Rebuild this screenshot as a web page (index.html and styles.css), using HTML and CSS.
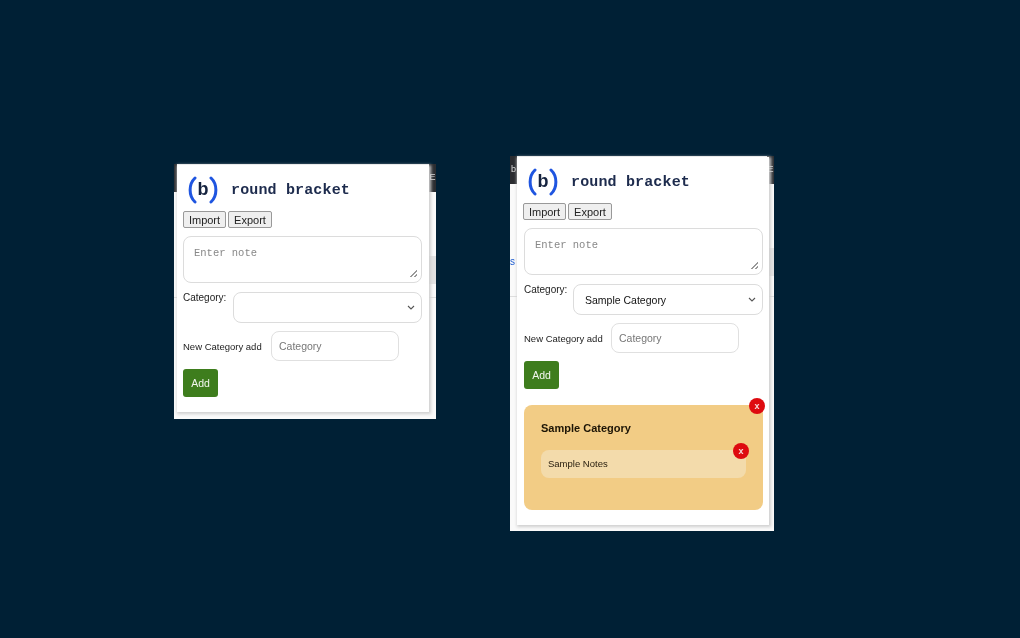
FILE: index.html
```html
<!DOCTYPE html>
<html lang="en">
<head>
<meta charset="utf-8">
<title>round bracket</title>
<link rel="stylesheet" href="styles.css">
</head>
<body>
<div class="desktop">
  <section class="shot shot-a">
    <div class="backdrop">
      <div class="strip strip-left"></div>
      <div class="strip strip-right"><span>E</span></div>
      <div class="tab tab-right"></div>
      <div class="rule rule-a"></div>
    </div>
    <div class="popup">
      <header class="brand">
        <span class="logo"><svg width="30" height="28" viewBox="0 0 30 28"><path d="M7 2C0.5 8 0.5 20 7 26M23 2C29.500 8 29.500 20 23 26" fill="none" stroke="#1f55e0" stroke-width="3" stroke-linecap="round"/></svg><b>b</b></span>
        <span class="brand-name">round bracket</span>
      </header>
      <div class="actions"><button class="tool">Import</button><button class="tool">Export</button></div>
      <textarea class="note-input" placeholder="Enter note"></textarea>
      <div class="row row-cat">
        <label class="cat-label">Category:</label>
        <div class="select"><span></span><svg width="8" height="5" viewBox="0 0 8 5"><path d="M1 1l3 3 3-3" fill="none" stroke="#555" stroke-width="1.100"/></svg></div>
      </div>
      <div class="row row-new">
        <label class="new-label">New Category add</label>
        <input class="new-input" placeholder="Category">
      </div>
      <button class="add">Add</button>
    </div>
  </section>

  <section class="shot shot-b">
    <div class="backdrop">
      <div class="strip strip-left"><span>b</span></div>
      <div class="strip strip-right"><span>E</span></div>
      <div class="tab tab-right"></div>
      <div class="rule rule-b"></div>
      <div class="link-bit">s</div>
    </div>
    <div class="popup">
      <header class="brand">
        <span class="logo"><svg width="30" height="28" viewBox="0 0 30 28"><path d="M7 2C0.5 8 0.5 20 7 26M23 2C29.500 8 29.500 20 23 26" fill="none" stroke="#1f55e0" stroke-width="3" stroke-linecap="round"/></svg><b>b</b></span>
        <span class="brand-name">round bracket</span>
      </header>
      <div class="actions"><button class="tool">Import</button><button class="tool">Export</button></div>
      <textarea class="note-input" placeholder="Enter note"></textarea>
      <div class="row row-cat">
        <label class="cat-label">Category:</label>
        <div class="select"><span>Sample Category</span><svg width="8" height="5" viewBox="0 0 8 5"><path d="M1 1l3 3 3-3" fill="none" stroke="#555" stroke-width="1.100"/></svg></div>
      </div>
      <div class="row row-new">
        <label class="new-label">New Category add</label>
        <input class="new-input" placeholder="Category">
      </div>
      <button class="add">Add</button>
      <article class="card">
        <button class="close close-card">x</button>
        <h2 class="card-title">Sample Category</h2>
        <div class="note">Sample Notes<button class="close close-note">x</button></div>
      </article>
    </div>
  </section>
</div>
</body>
</html>
```
FILE: styles.css
```css
* { box-sizing: border-box; }
html, body { margin: 0; height: 100%; }
body { background: #002035; font-family: "Liberation Sans", Arial, sans-serif; overflow: hidden; }
.desktop { position: relative; width: 1020px; height: 638px; background: #002035; filter: blur(0.55px); }

.shot { position: absolute; background: #fafafa; }
.shot-a { left: 174px; top: 164px; width: 262px; height: 255px; }
.shot-b { left: 510px; top: 156px; width: 264px; height: 375px; }

.backdrop { position: absolute; inset: 0; overflow: hidden; }
.strip { position: absolute; top: 0; width: 7px; height: 28px; background: #2a2c30; color: #ddd; font-size: 9px; line-height: 26px; text-align: center; }
.strip-right { right: 0; }
.strip-left { left: 0; width: 7px; }
.shot-a .strip-left { width: 3px; }
.tab { position: absolute; right: 0; top: 92px; width: 7px; height: 28px; background: #e2e2e2; }
.rule { position: absolute; left: 0; right: 0; height: 1px; background: #dedede; }
.rule-a { top: 133px; }
.rule-b { top: 140px; }
.link-bit { position: absolute; left: 0; top: 100px; width: 6px; color: #1a5ad0; font-size: 10px; }

.popup { position: absolute; left: 3px; top: 1px; width: 252px; height: 247px; background: #fff; padding: 10px 7px 0 6px; box-shadow: 1px 1px 3px 1px #cfcfcf; }
.shot-b .popup { left: 7px; height: 368px; padding-left: 7px; }

.brand { display: flex; align-items: center; height: 30px; margin-left: 5px; }
.shot-b .brand { margin-left: 4px; }
.logo { position: relative; display: flex; align-items: center; justify-content: center; width: 30px; height: 28px; }
.logo svg { position: absolute; left: 0; top: 0; }
.logo b { font-family: "Liberation Sans", Arial, sans-serif; font-size: 18px; color: #15233f; font-weight: 700; line-height: 26px; height: 28px; }
.brand-name { margin-left: 13px; font-family: "Liberation Mono", monospace; font-size: 15px; font-weight: 700; letter-spacing: 0.15px; color: #1d2b4d; white-space: nowrap; }

.actions { display: flex; gap: 2px; margin-top: 6px; }
.shot-b .actions { margin-left: -1px; }
.tool { height: 17px; padding: 0; width: 43px; background: #efefef; border: 1px solid #999; border-radius: 2px; font: 11px "Liberation Sans", Arial, sans-serif; color: #222; line-height: 14px; }
.tool + .tool { width: 44px; }

.note-input { display: block; width: 239px; height: 47px; margin: 8px 0 0; padding: 10px 10px; border: 1px solid #dcdcdc; border-radius: 8px; font: 10.500px "Liberation Mono", monospace; outline: none; background: #fff; }
.note-input::placeholder { color: #888; }
.note-input::-webkit-resizer { background: linear-gradient(135deg, transparent 48%, #999 48%, #999 58%, transparent 58%, transparent 74%, #999 74%, #999 86%, transparent 86%) no-repeat right 4px bottom 5px / 7px 7px; }

.row { display: flex; }
.row-cat { margin-top: 9px; width: 239px; justify-content: space-between; align-items: flex-start; }
.cat-label { font-size: 10px; color: #222; }
.select { display: flex; align-items: center; justify-content: space-between; width: 189px; height: 31px; padding: 0 6px 0 11px; border: 1px solid #dcdcdc; border-radius: 8px; font-size: 10.500px; color: #111; background: #fff; }
.shot-b .select { width: 190px; }
.row-new { margin-top: 8px; align-items: center; }
.new-label { width: 88px; font-size: 9.500px; color: #222; white-space: nowrap; }
.shot-b .new-label { width: 87px; }
.new-input { width: 128px; height: 30px; padding: 0 7px; border: 1px solid #e0e0e0; border-radius: 8px; font: 10.500px "Liberation Sans", Arial, sans-serif; outline: none; background: #fff; }
.new-input::placeholder { color: #777; }

.add { display: block; width: 35px; height: 28px; margin-top: 8px; padding: 0; background: #3e7d1d; color: #f2f6ee; border: 0; border-radius: 3px; font: 10.500px "Liberation Sans", Arial, sans-serif; }

.card { position: relative; width: 239px; height: 105px; margin-top: 16px; padding: 16px 17px 0; background: #f2cc85; border-radius: 8px; }
.card-title { margin: 0; font-size: 11px; font-weight: 700; color: #1c1405; line-height: 14px; }
.note { position: relative; margin-top: 15px; width: 205px; height: 28px; padding-left: 7px; background: #f3dbab; border-radius: 8px; font-size: 9.500px; line-height: 28px; color: #2a2010; }
.close { position: absolute; width: 16px; height: 16px; padding: 0; border: 0; border-radius: 50%; background: #de0a0f; color: #f6d9d9; font: 700 9px/15px "Liberation Sans", Arial, sans-serif; }
.close-card { right: -2px; top: -7px; }
.close-note { right: -3px; top: -7px; }
```
